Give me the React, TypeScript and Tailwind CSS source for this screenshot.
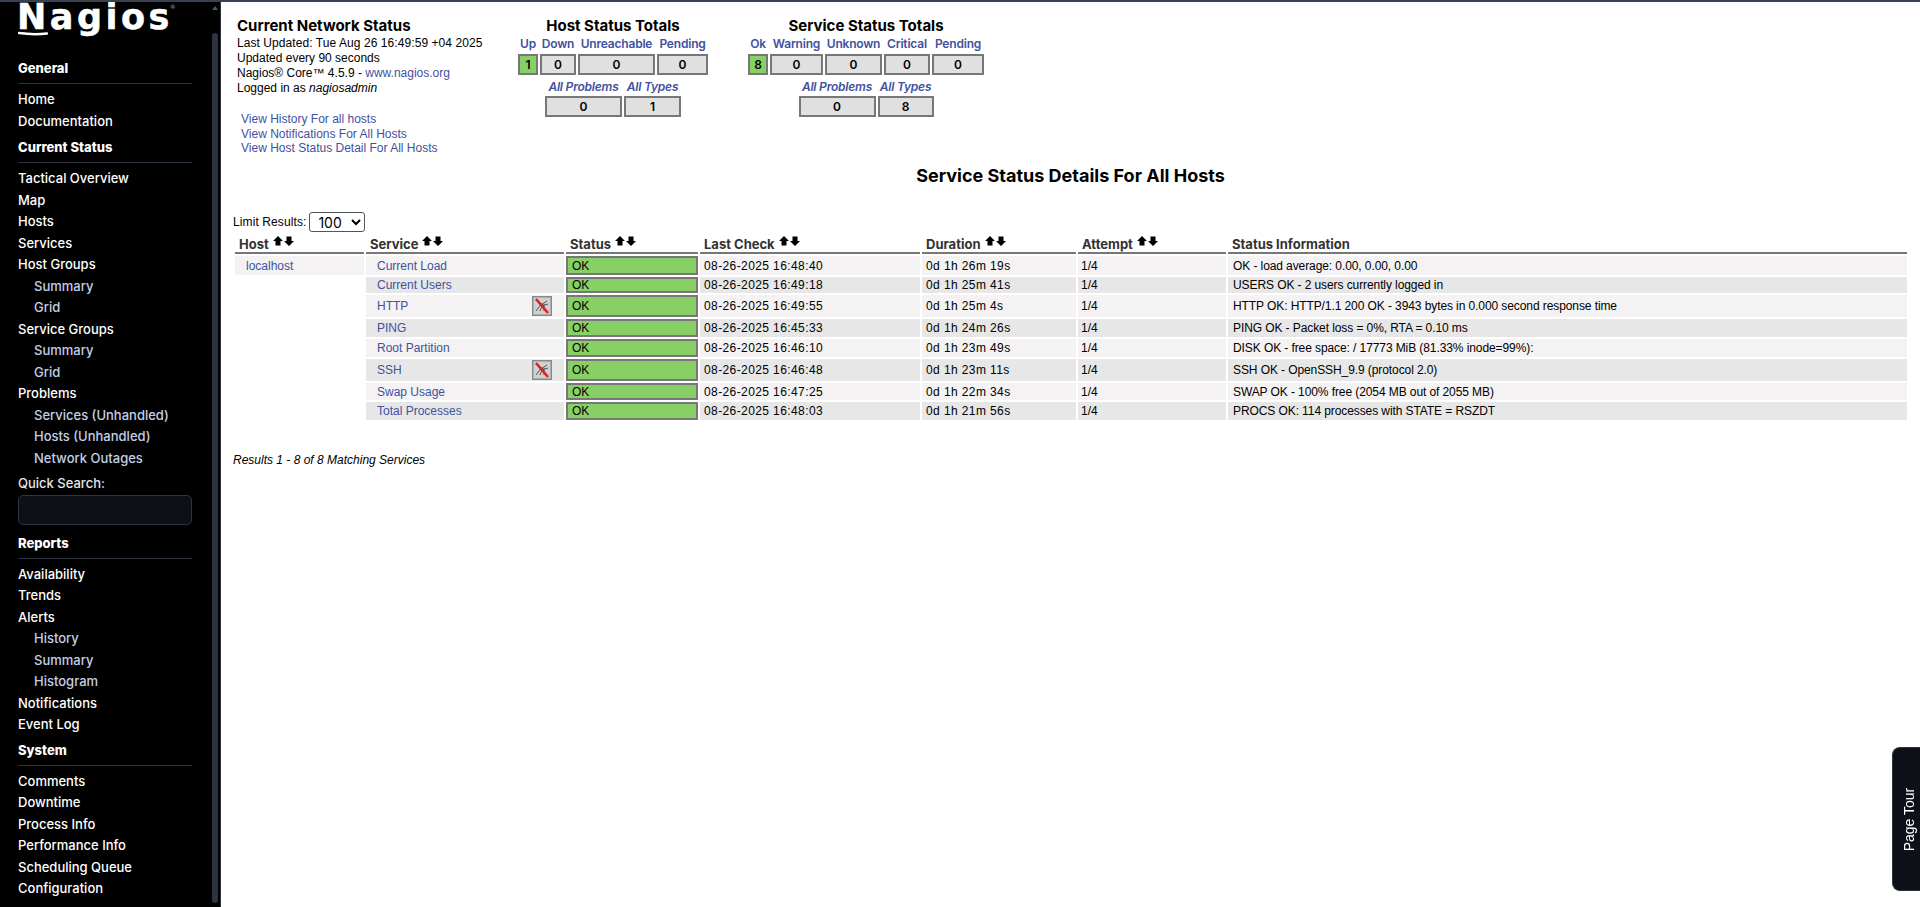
const sections = [
  {
    title: "General",
    items: [
      { label: "Home" },
      { label: "Documentation" },
    ],
  },
  {
    title: "Current Status",
    items: [
      { label: "Tactical Overview" },
      { label: "Map" },
      { label: "Hosts" },
      { label: "Services" },
      { label: "Host Groups" },
      { label: "Summary", sub: true },
      { label: "Grid", sub: true },
      { label: "Service Groups" },
      { label: "Summary", sub: true },
      { label: "Grid", sub: true },
      { label: "Problems" },
      { label: "Services (Unhandled)", sub: true },
      { label: "Hosts (Unhandled)", sub: true },
      { label: "Network Outages", sub: true },
    ],
  },
];

const reports = [
  { label: "Availability" },
  { label: "Trends" },
  { label: "Alerts" },
  { label: "History", sub: true },
  { label: "Summary", sub: true },
  { label: "Histogram", sub: true },
  { label: "Notifications" },
  { label: "Event Log" },
];

const system = ["Comments", "Downtime", "Process Info", "Performance Info", "Scheduling Queue", "Configuration"];

const rows = [
  { service: "Current Load", check: "08-26-2025 16:48:40", duration: "0d 1h 26m 19s", info: "OK - load average: 0.00, 0.00, 0.00", h: "h-[19px]" },
  { service: "Current Users", check: "08-26-2025 16:49:18", duration: "0d 1h 25m 41s", info: "USERS OK - 2 users currently logged in", h: "h-[16px]" },
  { service: "HTTP", check: "08-26-2025 16:49:55", duration: "0d 1h 25m 4s", info: "HTTP OK: HTTP/1.1 200 OK - 3943 bytes in 0.000 second response time", h: "h-[22px]", passive: true },
  { service: "PING", check: "08-26-2025 16:45:33", duration: "0d 1h 24m 26s", info: "PING OK - Packet loss = 0%, RTA = 0.10 ms", h: "h-[18px]" },
  { service: "Root Partition", check: "08-26-2025 16:46:10", duration: "0d 1h 23m 49s", info: "DISK OK - free space: / 17773 MiB (81.33% inode=99%):", h: "h-[18px]" },
  { service: "SSH", check: "08-26-2025 16:46:48", duration: "0d 1h 23m 11s", info: "SSH OK - OpenSSH_9.9 (protocol 2.0)", h: "h-[22px]", passive: true },
  { service: "Swap Usage", check: "08-26-2025 16:47:25", duration: "0d 1h 22m 34s", info: "SWAP OK - 100% free (2054 MB out of 2055 MB)", h: "h-[17px]" },
  { service: "Total Processes", check: "08-26-2025 16:48:03", duration: "0d 1h 21m 56s", info: "PROCS OK: 114 processes with STATE = RSZDT", h: "h-[18px]" },
];

function NavItem({ label, sub }: { label: string; sub?: boolean }) {
  return (
    <div className={`h-[21.5px] leading-[21.5px] text-[13px] font-medium whitespace-nowrap ${sub ? "pl-4 text-[#c3d0e8]" : "text-white"}`}>{label}</div>
  );
}

function NavHeader({ title }: { title: string }) {
  return <div className="h-[24px] leading-[16px] text-[13px] font-extrabold text-white border-b border-[#2d3440] mb-[5px]">{title}</div>;
}

function SortArrows() {
  return (
    <span className="inline-flex gap-[1px] ml-1 relative -top-[4px] align-middle">
      <svg width="10" height="10" viewBox="0 0 10 10"><path d="M5 0 L10 5 H7.5 V9.5 H2.5 V5 H0 Z" fill="#000" /></svg>
      <svg width="10" height="10" viewBox="0 0 10 10"><path d="M5 10 L10 5 H7.5 V0.5 H2.5 V5 H0 Z" fill="#000" /></svg>
    </span>
  );
}

function PassiveIcon() {
  return (
    <svg width="20" height="20" viewBox="0 0 20 20" className="shrink-0">
      <rect x="0.75" y="0.75" width="18.5" height="18.5" fill="#d0d0d0" stroke="#8a8a8a" strokeWidth="1.5" />
      <path d="M4 15 L10 7 M8 15 L11 8 M12 15 L12 8 M15 5 L9 9 M16 8 L10 10" stroke="#555" strokeWidth="1" fill="none" />
      <path d="M4 3 L16 17" stroke="#d8201c" strokeWidth="2.5" />
    </svg>
  );
}

function Totals({ title, cols, tracks, values, second, width }: { title: string; cols: string[]; tracks: string; values: number[]; second: string; width: string }) {
  return (
    <div className={`flex flex-col items-center ${width}`}>
      <div className="font-['Inter'] font-bold text-[15px] leading-[17px] mt-[15px] text-black whitespace-nowrap">{title}</div>
      <div className={`grid gap-x-[2px] gap-y-[1px] mt-[1px] ${tracks}`}>
        {cols.map((c) => (
          <div key={c} className="text-center text-[12px] leading-[18px] font-['Inter'] font-semibold tracking-[-0.2px] text-[#3f51a0] whitespace-nowrap">{c}</div>
        ))}
        {values.map((v, i) => (
          <div key={i} className={`h-[21px] border-2 border-[#777] text-center font-['Inter'] font-semibold text-[12px] leading-[17px] text-black ${v > 0 ? "bg-[#88d066]" : "bg-[#e0e0e0]"}`}>{v}</div>
        ))}
      </div>
      <div className={`grid gap-x-[2px] mt-[3px] ${second}`}>
        <div className="text-center text-[12px] leading-[18px] font-['Inter'] font-semibold italic tracking-[-0.2px] text-[#3f51a0] whitespace-nowrap">All Problems</div>
        <div className="text-center text-[12px] leading-[18px] font-['Inter'] font-semibold italic tracking-[-0.2px] text-[#3f51a0] whitespace-nowrap">All Types</div>
        <div className="h-[21px] border-2 border-[#777] bg-[#e0e0e0] text-center font-['Inter'] font-semibold text-[12px] leading-[17px]">0</div>
        <div className="h-[21px] border-2 border-[#777] bg-[#e0e0e0] text-center font-['Inter'] font-semibold text-[12px] leading-[17px]">{values.reduce((a, b) => a + b, 0)}</div>
      </div>
    </div>
  );
}

const thClass = "border-b-2 border-[#777] h-[21px] pl-[4px] text-left align-bottom pb-0 font-['Inter'] font-bold text-[13px] leading-[16px] text-[#333] whitespace-nowrap";

export default function App() {
  return (
    <div className="h-[907px] w-[1920px] overflow-hidden bg-white flex flex-col font-['Liberation_Sans',Arial,sans-serif] text-[12px] text-black">
      <div className="h-[2px] bg-[#374151] shrink-0" />
      <div className="flex flex-1 min-h-0">
        {/* sidebar */}
        <div className="w-[221px] shrink-0 bg-black border-r border-[#2d3440] flex font-['Inter',sans-serif] relative overflow-hidden">
          <div className="w-[211px] pl-[18px] pr-[19px]">
            <div className="h-[58px] relative">
              <div className="absolute left-[-1px] top-0 text-white text-[35px] leading-[30px] whitespace-nowrap font-['DejaVu_Sans',sans-serif] font-bold tracking-[3.5px] [-webkit-text-stroke:0.5px_white]">
                Nagios<span className="inline-block align-top -ml-[3px] text-[6px] leading-[8px] font-normal tracking-normal text-[#9ca3af] [-webkit-text-stroke:0] mt-[1px]">®</span>
              </div>
              <svg width="30" height="5" viewBox="0 0 30 5" className="absolute left-0 top-[29px]">
                <path d="M1 2 Q15 4 29 2.5" stroke="#fff" strokeWidth="2.5" fill="none" strokeLinecap="round" />
              </svg>
            </div>
            {sections.map((s, i) => (
              <div key={s.title} className={i > 0 ? "mt-[7px]" : ""}>
                <NavHeader title={s.title} />
                {s.items.map((it, j) => (
                  <NavItem key={j} label={it.label} sub={it.sub} />
                ))}
              </div>
            ))}
            <div className="text-[13px] font-medium text-[#e5e7eb] leading-[16px] mt-[5.5px]">Quick Search:</div>
            <div className="h-[30px] mt-[4px] rounded-[5px] bg-[#0d1117] border border-[#2d3440]" />
            <div className="mt-[10px]">
              <NavHeader title="Reports" />
              {reports.map((it, j) => (
                <NavItem key={j} label={it.label} sub={it.sub} />
              ))}
            </div>
            <div className="mt-[6px]">
              <NavHeader title="System" />
              {system.map((l) => (
                <NavItem key={l} label={l} />
              ))}
            </div>
          </div>
          <div className="w-[6px] ml-[1px] flex flex-col items-center">
            <div className="mt-[4px] w-0 h-0 border-x-[3px] border-x-transparent border-b-[4px] border-b-[#4b5563]" />
            <div className="mt-[23px] w-[6px] h-[870px] rounded-full bg-[#2d3440]" />
          </div>
        </div>

        {/* main */}
        <div className="flex-1 min-w-0">
          <div className="flex h-[159px]">
            <div className="w-[297px] pl-[16px] shrink-0">
              <div className="font-['Inter'] font-bold text-[15px] leading-[17px] mt-[15px] mb-[2px] whitespace-nowrap">Current Network Status</div>
              <div className="leading-[15px] tracking-[0.07px]">Last Updated: Tue Aug 26 16:49:59 +04 2025</div>
              <div className="leading-[15px]">Updated every 90 seconds</div>
              <div className="leading-[15px]">Nagios® Core™ 4.5.9 - <span className="text-[#3f51a0]">www.nagios.org</span></div>
              <div className="leading-[15px]">Logged in as <i>nagiosadmin</i></div>
              <div className="mt-[16px] pl-[4px] text-[#3f51a0] leading-[14.7px]">
                <div>View History For all hosts</div>
                <div>View Notifications For All Hosts</div>
                <div>View Host Status Detail For All Hosts</div>
              </div>
            </div>
            <Totals
              title="Host Status Totals"
              cols={["Up", "Down", "Unreachable", "Pending"]}
              tracks="grid-cols-[20px_36px_77px_51px]"
              values={[1, 0, 0, 0]}
              second="grid-cols-[77px_57px]"
              width="w-[190px] shrink-0"
            />
            <div className="w-[40px] shrink-0" />
            <Totals
              title="Service Status Totals"
              cols={["Ok", "Warning", "Unknown", "Critical", "Pending"]}
              tracks="grid-cols-[20px_53px_57px_46px_52px]"
              values={[8, 0, 0, 0, 0]}
              second="grid-cols-[77px_56px]"
              width="w-[236px] shrink-0"
            />
          </div>
          <div className="text-center font-['Inter'] font-bold text-[18px] leading-[22px] mt-[4px]">Service Status Details For All Hosts</div>
          <div className="h-[20px] mt-[25px] pl-[12px] flex items-center gap-[1px]">
            <span className="tracking-[0.1px]">Limit Results:</span>
            <select defaultValue="100" className="ml-[2px] w-[56px] h-[20px] border border-[#555] rounded-[3px] bg-white text-[14px] pl-[4px] font-['Inter']">
              <option>100</option>
            </select>
          </div>
          <table className="ml-[12px] -mt-[1px] table-fixed border-separate border-spacing-x-[2px] border-spacing-y-[2px] w-[1676px] leading-[12px]">
            <colgroup>
              <col className="w-[129px]" />
              <col className="w-[198px]" />
              <col className="w-[132px]" />
              <col className="w-[220px]" />
              <col className="w-[154px]" />
              <col className="w-[148px]" />
              <col className="w-[679px]" />
            </colgroup>
            <thead>
              <tr>
                <th className={thClass}>Host<SortArrows /></th>
                <th className={thClass}>Service<SortArrows /></th>
                <th className={thClass}>Status<SortArrows /></th>
                <th className={thClass}>Last Check<SortArrows /></th>
                <th className={thClass}>Duration<SortArrows /></th>
                <th className={thClass}>Attempt<SortArrows /></th>
                <th className={thClass}>Status Information</th>
              </tr>
            </thead>
            <tbody>
              {rows.map((r, i) => {
                const bg = i % 2 === 0 ? "bg-[#f4f2f2]" : "bg-[#e7e7e7]";
                return (
                  <tr key={r.service} className={r.h}>
                    {i === 0 ? (
                      <td className={`${bg} pl-[11px] text-[#3f51a0]`}>localhost</td>
                    ) : (
                      <td />
                    )}
                    <td className={`${bg} p-0`}>
                      <div className="flex items-center justify-between pl-[11px] pr-[12px]">
                        <span className="text-[#3f51a0]">{r.service}</span>
                        {r.passive && <PassiveIcon />}
                      </div>
                    </td>
                    <td className="bg-[#88d066] border-2 border-[#777] pl-[4px]">OK</td>
                    <td className={`${bg} pl-[4px] tracking-[0.4px]`}>{r.check}</td>
                    <td className={`${bg} pl-[4px] tracking-[0.4px]`}>{r.duration}</td>
                    <td className={`${bg} pl-[3px]`}>1/4</td>
                    <td className={`${bg} pl-[5px] tracking-[-0.09px]`}>{r.info}</td>
                  </tr>
                );
              })}
            </tbody>
          </table>
          <div className="mt-[31px] pl-[12px] italic leading-[15px]">Results 1 - 8 of 8 Matching Services</div>
        </div>
      </div>

      <div className="fixed right-0 top-[747px] w-[28px] h-[144px] bg-[#0d1117] border border-r-0 border-[#2d3440] rounded-l-[8px] flex items-center justify-center pl-[6px]">
        <span className="-rotate-90 whitespace-nowrap text-white text-[14px]">Page Tour</span>
      </div>
    </div>
  );
}
